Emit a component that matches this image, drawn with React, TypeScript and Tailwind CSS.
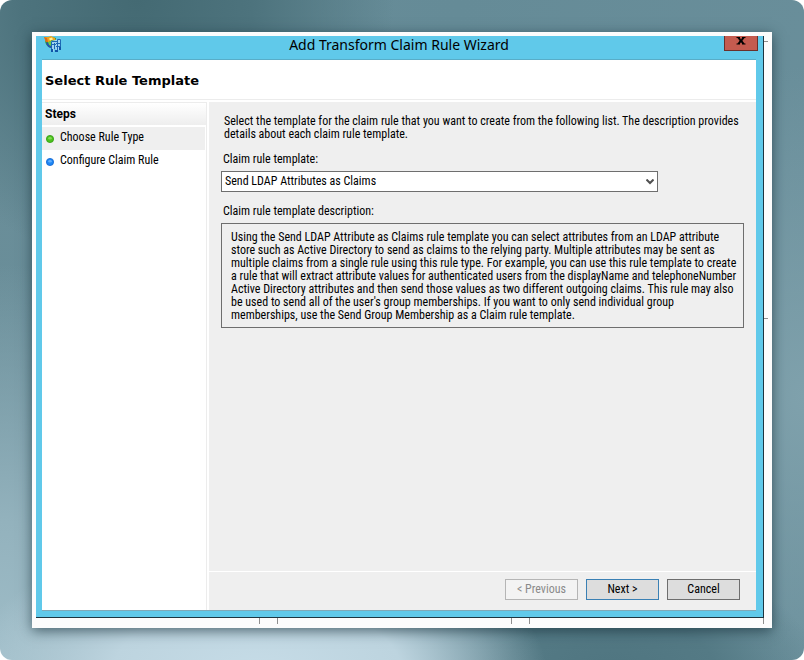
import React from "react";

const steps = [
  { label: "Choose Rule Type", dot: "#4cc21c", edge: "#2f9a10", shine: "#a5ea7c", active: true },
  { label: "Configure Claim Rule", dot: "#1e86f5", edge: "#0f64d0", shine: "#8cc8ff", active: false },
];

const intro = [
  "Select the template for the claim rule that you want to create from the following list. The description provides",
  "details about each claim rule template.",
];

const description = [
  "Using the Send LDAP Attribute as Claims rule template you can select attributes from an LDAP attribute",
  "store such as Active Directory to send as claims to the relying party. Multiple attributes may be sent as",
  "multiple claims from a single rule using this rule type. For example, you can use this rule template to create",
  "a rule that will extract attribute values for authenticated users from the displayName and telephoneNumber",
  "Active Directory attributes and then send those values as two different outgoing claims. This rule may also",
  "be used to send all of the user's group memberships. If you want to only send individual group",
  "memberships, use the Send Group Membership as a Claim rule template.",
];

function WizardIcon() {
  return (
    <svg width="18" height="17" viewBox="0 0 18 17" aria-hidden="true">
      <path d="M1 3C1 8 3 11 7 12L12 8V2L8 1z" fill="#2f9a3a" />
      <path d="M2 7C3 10 5 12 8 12V8L5 6z" fill="#2350b4" />
      <path d="M0 1L4 1L7 0L11 2L12 5L8 4L5 6L2 6z" fill="#f0a41c" />
      <path d="M0 1L3 2L4 6L2 6z" fill="#dd6a1a" />
      <path d="M5 2.500L8 1.500L9 3.500L6 4.500z" fill="#fdf09a" />
      <path d="M4 6L7 5V10L5 9z" fill="#67cf4a" />
      <path d="M7 5L14 3.500L17 2.500V12H15V14H11.500V12.500H10V15.500H7z" fill="#9fd4f0" />
      <path
        d="M7.500 15.500V5.500H13.500V3.500H16.500V12.500M10.500 7V13M13.500 5V14M8 8.500H12M12 7.500H16M12 10.500H16"
        fill="none"
        stroke="#1c68b4"
      />
      <path d="M7 13h2v3H7zM11 14h3v2h-3zM15 11h2v3h-2z" fill="#0f55a8" />
    </svg>
  );
}

function StepDot({ dot, edge, shine }: { dot: string; edge: string; shine: string }) {
  return (
    <svg width="8" height="8" viewBox="0 0 8 8" aria-hidden="true">
      <circle cx="4" cy="4" r="3.600" fill={dot} stroke={edge} strokeWidth="0.800" />
      <ellipse cx="4" cy="3.200" rx="1.800" ry="1.300" fill={shine} opacity="0.600" />
    </svg>
  );
}

function Lines({ items }: { items: string[] }) {
  return (
    <>
      {items.map((line) => (
        <span key={line} className="block whitespace-nowrap">
          {line}
        </span>
      ))}
    </>
  );
}

export default function App() {
  return (
    <div className="min-h-screen bg-white">
      <div className="flex min-h-screen flex-col rounded-[12px] bg-[radial-gradient(ellipse_36%_22%_at_32%_102%,#c6dce7_0%,#bdd4df_50%,transparent_100%),radial-gradient(ellipse_26%_18%_at_76%_102%,#4f7580_0%,#547a85_50%,transparent_100%),radial-gradient(ellipse_36%_60%_at_0%_100%,#9fbdc8_0%,#93b2bd_35%,transparent_100%),radial-gradient(ellipse_32%_40%_at_17%_0%,#446a73_0%,#4d737d_45%,transparent_100%),radial-gradient(ellipse_30%_50%_at_100%_60%,#7fa1ac_0%,transparent_100%),linear-gradient(100deg,#6a8e99_0%,#658b97_50%,#6a8f9b_100%)] p-8 font-['Roboto_Condensed',Roboto,sans-serif] text-[12px] leading-[13px] text-black">
        <div className="relative flex flex-1 flex-col bg-[#fcfcfc] pt-1 pr-2 pb-[10px] pl-1 shadow-[0_3px_12px_rgba(20,45,55,0.65)]">
          <div className="flex flex-1 flex-col border-r border-b border-[#1d3540] bg-[#60c9ea] pr-[7px] pb-[6px] pl-[6px]">
            <header className="grid h-6 grid-cols-[34px_1fr_34px] items-start border-b border-[#58adc8]">
              <div className="pl-[2px]">
                <WizardIcon />
              </div>
              <h1 className="text-center font-['Noto_Sans','Open_Sans',sans-serif] text-[14px] leading-[18px]">
                Add Transform Claim Rule Wizard
              </h1>
              <button
                type="button"
                aria-label="Close"
                className="ml-[2px] flex h-[15px] w-[34px] items-start justify-center border border-t-0 border-[#6b2f2a] bg-[#c45b4f] pt-px"
              >
                <svg width="10" height="8" viewBox="0 0 10 8" aria-hidden="true">
                  <path
                    d="M0.500 0H4V1L5 2.400L6 1V0H9.500V1H8.500L6.400 3.800L8.500 6.500H9.500V7.500H6V6.500L5 5.200L4 6.500V7.500H0.500V6.500H1.500L3.600 3.800L1.500 1H0.500z"
                    fill="#000"
                  />
                </svg>
              </button>
            </header>

            <main className="flex flex-1 flex-col border-b border-[#7fa9b8] bg-white">
              <div className="flex h-10 items-center border-b border-[#ececec] px-[3px] pt-[3px]">
                <h2 className="font-['DejaVu_Sans',sans-serif] text-[13px] leading-[18px] font-bold">
                  Select Rule Template
                </h2>
              </div>
              <div className="flex flex-1 pt-[2px]">
                <nav aria-labelledby="steps" className="mr-[2px] w-[165px] shrink-0 border-t border-r border-[#ececec]">
                  <h3
                    id="steps"
                    className="mb-[2px] flex h-[22px] items-center bg-linear-to-b from-white to-[#eeeeee] pl-[3px] font-[Roboto,sans-serif] font-bold"
                  >
                    Steps
                  </h3>
                  <ol className="mr-px">
                    {steps.map((s) => (
                      <li
                        key={s.label}
                        aria-current={s.active ? "step" : undefined}
                        className={`flex h-[23px] items-center gap-[6px] pl-1 ${s.active ? "bg-[#efefef]" : ""}`}
                      >
                        <StepDot dot={s.dot} edge={s.edge} shine={s.shine} />
                        <span className="pb-[2px]">{s.label}</span>
                      </li>
                    ))}
                  </ol>
                </nav>

                <form className="flex min-w-0 flex-1 flex-col bg-[#efefef]" onSubmit={(e) => e.preventDefault()}>
                  <section className="flex-1 pt-[13px] pr-3 pl-3">
                    <p className="pl-[3px]">
                      <Lines items={intro} />
                    </p>
                    <label htmlFor="template" className="mt-3 block pl-[2px]">
                      Claim rule template:
                    </label>
                    <div className="relative mt-[5px] mr-[86px]">
                      <select
                        id="template"
                        className="block h-[21px] w-full appearance-none border border-[#6e6e6e] bg-white pl-[3px]"
                      >
                        <option>Send LDAP Attributes as Claims</option>
                      </select>
                      <svg
                        className="pointer-events-none absolute top-2 right-1"
                        width="8"
                        height="6"
                        viewBox="0 0 8 6"
                        aria-hidden="true"
                      >
                        <path d="M0.500 0.500L4 4L7.500 0.500" fill="none" stroke="#505050" strokeWidth="2" />
                      </svg>
                    </div>
                    <h3 className="mt-[13px] pl-[2px]">Claim rule template description:</h3>
                    <p className="mt-[5px] border border-[#6e6e6e] pt-[7px] pb-[5px] pl-[9px]">
                      <Lines items={description} />
                    </p>
                  </section>
                  <footer className="flex h-[39px] items-start justify-end gap-2 border-t border-white pt-[7px] pr-4">
                    <button
                      type="button"
                      disabled
                      className="h-[21px] w-[73px] border border-[#b5b5b5] bg-[#f3f3f3] text-[#8a8a8a]"
                    >
                      &lt; Previous
                    </button>
                    <button type="submit" className="h-[21px] w-[73px] border border-[#3a80b4] bg-[#dddddd]">
                      Next &gt;
                    </button>
                    <button type="button" className="h-[21px] w-[73px] border border-[#6e6e6e] bg-[#dddddd]">
                      Cancel
                    </button>
                  </footer>
                </form>
              </div>
            </main>
          </div>
          {/* Grid lines of the window behind the wizard */}
          <svg className="absolute bottom-1 left-0" width="100%" height="6" aria-hidden="true">
            <path d="M227.500 0V6M245.500 0V6M479.500 0V6M497.500 0V6M731.500 0V6" stroke="#8f8f8f" />
          </svg>
          <svg className="absolute top-0 right-1" width="4" height="300" aria-hidden="true">
            <path d="M0 9.500H4M0 286.500H4" stroke="#8f8f8f" />
          </svg>
        </div>
      </div>
    </div>
  );
}
